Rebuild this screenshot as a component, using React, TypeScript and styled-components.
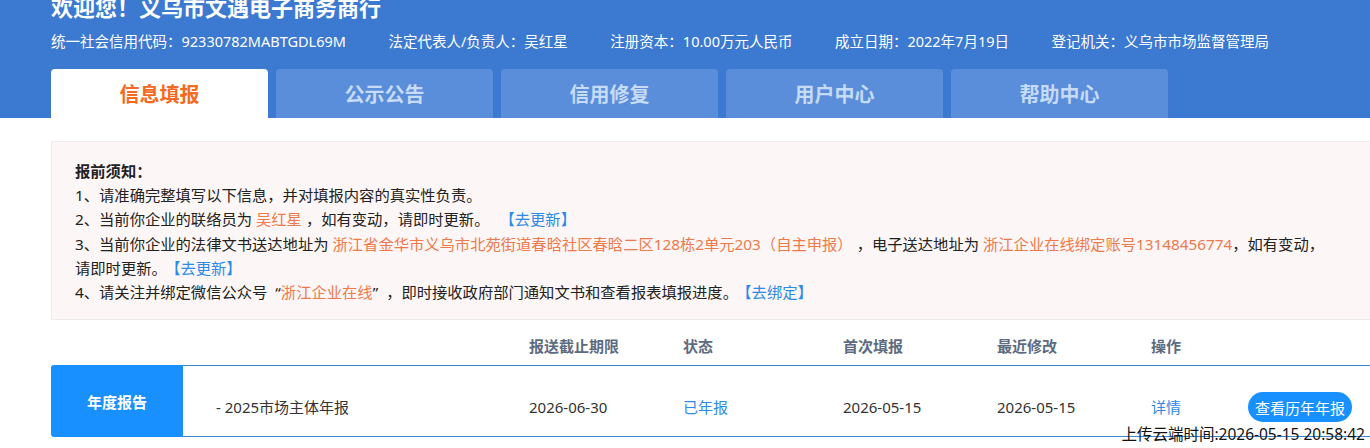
import styled, { createGlobalStyle } from 'styled-components';

const GlobalStyle = createGlobalStyle`
  html, body {
    margin: 0;
    padding: 0;
    background: #fff;
    overflow: hidden;
  }
  body {
    font-family: "Noto Sans", "Noto Sans CJK SC", sans-serif;
    color: #333;
  }
  * {
    box-sizing: border-box;
  }
`;

const Page = styled.div`
  width: 1370px;
  height: 448px;
  overflow: hidden;
`;

const Header = styled.div`
  background-color: #3c79d0;
  padding-left: 51px;
  height: 118px;
  display: flex;
  flex-direction: column;
`;

const Title = styled.h1`
  margin: -8px 0 0;
  font-size: 22px;
  line-height: 30px;
  font-weight: bold;
  color: #fff;
`;

const InfoRow = styled.div`
  margin-top: 9px;
  display: flex;
  gap: 42.5px;
  font-size: 14.5px;
  line-height: 20px;
  color: #fff;
`;

const Tabs = styled.div`
  margin-top: 18px;
  display: flex;
  gap: 8px;
`;

const Tab = styled.div<{ $active?: boolean }>`
  width: 217px;
  height: 49px;
  border-radius: 4px 4px 0 0;
  display: flex;
  align-items: center;
  justify-content: center;
  font-size: 20px;
  font-weight: bold;
  background-color: ${(p) => (p.$active ? '#fff' : '#5a8dda')};
  color: ${(p) => (p.$active ? '#f56a1f' : '#c6dbf6')};
  cursor: pointer;
`;

const Content = styled.div`
  padding-left: 51px;
  width: 1371px;
`;

const Notice = styled.div`
  margin-top: 23px;
  background-color: #fdf6f6;
  border: 1px solid #ececec;
  padding: 17px 20px 15px 23px;
  font-size: 15.3px;
  line-height: 24.2px;
  color: #222;
`;

const NoticeTitle = styled.div`
  font-weight: bold;
`;

const Hl = styled.span`
  color: #ee7a4b;
`;

const Quote = styled.span<{ $open?: boolean }>`
  padding-left: ${(p) => (p.$open ? '8px' : '0')};
  padding-right: ${(p) => (p.$open ? '0' : '8px')};
`;

const Link = styled.a`
  color: #2b8be6;
  margin-left: 6px;
  cursor: pointer;
`;

const TableHead = styled.div`
  margin-top: 16px;
  padding-left: 132px;
  padding-bottom: 9px;
  display: grid;
  grid-template-columns: 346px 154px 160px 154px 154px 1fr;
  font-size: 15px;
  line-height: 20px;
  font-weight: bold;
  color: #5d6b80;
`;

const Row = styled.div`
  position: relative;
  display: flex;
  height: 72px;
`;

const RowLabel = styled.div`
  width: 132px;
  flex-shrink: 0;
  background-color: #1890ff;
  border-radius: 3px 0 0 3px;
  color: #fff;
  font-size: 15px;
  font-weight: bold;
  display: flex;
  align-items: center;
  justify-content: center;
`;

const RowBody = styled.div`
  flex: 1;
  border-top: 1px solid #3a87cb;
  border-bottom: 1px solid #3a87cb;
  padding-top: 12px;
  display: grid;
  grid-template-columns: 346px 154px 160px 154px 154px 97px 1fr;
  align-items: center;
  font-size: 15px;
  line-height: 20px;
  color: #333;
`;

const Cell = styled.div<{ $blue?: boolean; $indent?: boolean }>`
  color: ${(p) => (p.$blue ? '#2b8be6' : '#333')};
  padding-left: ${(p) => (p.$indent ? '33px' : '0')};
  white-space: nowrap;
`;

const HistoryButton = styled.button`
  width: 104px;
  height: 30px;
  border: none;
  border-radius: 15px;
  background-color: #1890ff;
  color: #fff;
  font-family: inherit;
  font-size: 15px;
  padding: 0;
  cursor: pointer;
`;

const UploadTime = styled.div`
  position: absolute;
  right: 6px;
  bottom: -7px;
  font-size: 15.5px;
  line-height: 20px;
  color: #111;
  white-space: nowrap;
`;

const tabs = ['信息填报', '公示公告', '信用修复', '用户中心', '帮助中心'];

const info = [
  '统一社会信用代码：92330782MABTGDL69M',
  '法定代表人/负责人：吴红星',
  '注册资本：10.00万元人民币',
  '成立日期：2022年7月19日',
  '登记机关：义乌市市场监督管理局',
];

export default function App() {
  return (
    <Page>
      <GlobalStyle />
      <Header>
        <Title>欢迎您！义乌市文遇电子商务商行</Title>
        <InfoRow>
          {info.map((t) => (
            <span key={t}>{t}</span>
          ))}
        </InfoRow>
        <Tabs>
          {tabs.map((t, i) => (
            <Tab key={t} $active={i === 0}>
              {t}
            </Tab>
          ))}
        </Tabs>
      </Header>
      <Content>
        <Notice>
          <NoticeTitle>报前须知：</NoticeTitle>
          <div>1、请准确完整填写以下信息，并对填报内容的真实性负责。</div>
          <div>
            2、当前你企业的联络员为 <Hl>吴红星</Hl> ，如有变动，请即时更新。 <Link>【去更新】</Link>
          </div>
          <div>
            3、当前你企业的法律文书送达地址为 <Hl>浙江省金华市义乌市北苑街道春晗社区春晗二区128栋2单元203（自主申报）</Hl> ，电子送达地址为{' '}
            <Hl>浙江企业在线绑定账号13148456774</Hl>，如有变动，
            <br />
            请即时更新。<Link>【去更新】</Link>
          </div>
          <div>
            4、请关注并绑定微信公众号<Quote $open>“</Quote>
            <Hl>浙江企业在线</Hl>
            <Quote>”</Quote>，即时接收政府部门通知文书和查看报表填报进度。<Link>【去绑定】</Link>
          </div>
        </Notice>
        <TableHead>
          <span />
          <span>报送截止期限</span>
          <span>状态</span>
          <span>首次填报</span>
          <span>最近修改</span>
          <span>操作</span>
        </TableHead>
        <Row>
          <RowLabel>年度报告</RowLabel>
          <RowBody>
            <Cell $indent>- 2025市场主体年报</Cell>
            <Cell>2026-06-30</Cell>
            <Cell $blue>已年报</Cell>
            <Cell>2026-05-15</Cell>
            <Cell>2026-05-15</Cell>
            <Cell $blue>详情</Cell>
            <div>
              <HistoryButton>查看历年年报</HistoryButton>
            </div>
          </RowBody>
          <UploadTime>上传云端时间:2026-05-15 20:58:42</UploadTime>
        </Row>
      </Content>
    </Page>
  );
}
